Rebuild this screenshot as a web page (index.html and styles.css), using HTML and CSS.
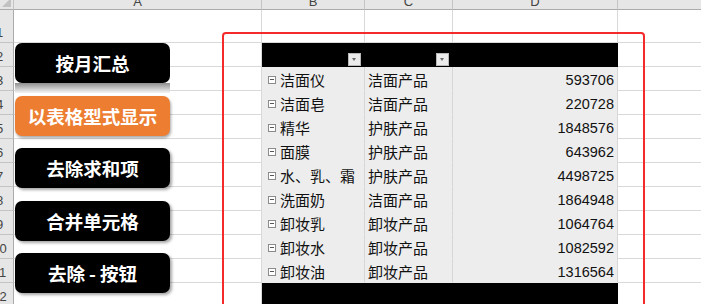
FILE: index.html
```html
<!DOCTYPE html>
<html>
<head>
  <meta charset="utf-8">
  <title>数据透视表</title>
  <link rel="stylesheet" href="styles.css">
</head>
<body>
  <div class="sheet">
    <div class="corner"></div><div class="colhead">A</div><div class="colhead">B</div><div class="colhead">C</div><div class="colhead">D</div><div class="colhead"></div>

    <div class="rowhead">1</div><div class="cell"></div><div class="cell"></div><div class="cell"></div><div class="cell"></div><div class="cell"></div>

    <div class="rowhead">2</div><div class="cell"></div>
    <div class="cell pv-head"><span class="drop"></span></div>
    <div class="cell pv-head"><span class="drop"></span></div>
    <div class="cell pv-head"></div><div class="cell"></div>

    <div class="rowhead">3</div><div class="cell"></div><div class="cell pv"><span class="fold"></span>洁面仪</div><div class="cell pv">洁面产品</div><div class="cell pv num">593706</div><div class="cell"></div>
    <div class="rowhead">4</div><div class="cell"></div><div class="cell pv"><span class="fold"></span>洁面皂</div><div class="cell pv">洁面产品</div><div class="cell pv num">220728</div><div class="cell"></div>
    <div class="rowhead">5</div><div class="cell"></div><div class="cell pv"><span class="fold"></span>精华</div><div class="cell pv">护肤产品</div><div class="cell pv num">1848576</div><div class="cell"></div>
    <div class="rowhead">6</div><div class="cell"></div><div class="cell pv"><span class="fold"></span>面膜</div><div class="cell pv">护肤产品</div><div class="cell pv num">643962</div><div class="cell"></div>
    <div class="rowhead">7</div><div class="cell"></div><div class="cell pv"><span class="fold"></span>水、乳、霜</div><div class="cell pv">护肤产品</div><div class="cell pv num">4498725</div><div class="cell"></div>
    <div class="rowhead">8</div><div class="cell"></div><div class="cell pv"><span class="fold"></span>洗面奶</div><div class="cell pv">洁面产品</div><div class="cell pv num">1864948</div><div class="cell"></div>
    <div class="rowhead">9</div><div class="cell"></div><div class="cell pv"><span class="fold"></span>卸妆乳</div><div class="cell pv">卸妆产品</div><div class="cell pv num">1064764</div><div class="cell"></div>
    <div class="rowhead">10</div><div class="cell"></div><div class="cell pv"><span class="fold"></span>卸妆水</div><div class="cell pv">卸妆产品</div><div class="cell pv num">1082592</div><div class="cell"></div>
    <div class="rowhead">11</div><div class="cell"></div><div class="cell pv"><span class="fold"></span>卸妆油</div><div class="cell pv">卸妆产品</div><div class="cell pv num">1316564</div><div class="cell"></div>

    <div class="rowhead">12</div><div class="cell"></div><div class="cell pv-head"></div><div class="cell pv-head"></div><div class="cell pv-head"></div><div class="cell"></div>
  </div>

  <!-- floating shapes over the sheet -->
  <div class="buttons">
    <div class="btn btn-glossy">按月汇总</div>
    <div class="btn btn-orange">以表格型式显示</div>
    <div class="btn">去除求和项</div>
    <div class="btn">合并单元格</div>
    <div class="btn">去除 - 按钮</div>
  </div>
  <div class="frame"></div>
</body>
</html>
```

FILE: styles.css
```css
body {
  margin: 0;
  width: 701px;
  height: 304px;
  overflow: hidden;
  position: relative;
  background: #fff;
  font-family: "Noto Sans CJK SC", "Liberation Sans", sans-serif;
}

/* Spreadsheet grid */
.sheet {
  display: grid;
  grid-template-columns: 28px 248px 103px 88px 165px 140px;
  grid-template-rows: 20px 33px repeat(11, 24px);
  margin: -10px 0 0 -14px;
}
.cell {
  box-sizing: border-box;
  border-right: 1px solid #d9d9d9;
  border-bottom: 1px solid #d9d9d9;
}
.corner {
  box-sizing: border-box;
  background: #e6e6e6;
  border-right: 1px solid #c4c4c4;
  border-bottom: 1px solid #ababab;
  position: relative;
}
.corner::after {
  content: "";
  position: absolute;
  right: 2px;
  bottom: 2px;
  border-style: solid;
  border-width: 0 0 9px 9px;
  border-color: transparent transparent #c2c2c2 transparent;
}
.colhead {
  box-sizing: border-box;
  background: #e6e6e6;
  border-right: 1px solid #c4c4c4;
  border-bottom: 1px solid #ababab;
  display: flex;
  justify-content: center;
  align-items: flex-end;
  font-family: "Liberation Sans", sans-serif;
  font-size: 13px;
  color: #444;
}
.rowhead {
  box-sizing: border-box;
  background: #e6e6e6;
  border-right: 1px solid #ababab;
  border-bottom: 1px solid #c4c4c4;
  display: flex;
  justify-content: center;
  align-items: flex-end;
  padding-bottom: 2px;
  font-family: "Liberation Sans", sans-serif;
  font-size: 13px;
  color: #444;
}

/* Pivot table */
.pv-head {
  background: #000;
  border-color: #000;
  display: flex;
  justify-content: flex-end;
  align-items: flex-end;
  padding: 0 3px 0 0;
}
.drop {
  box-sizing: border-box;
  width: 13px;
  height: 13px;
  background: #ececec;
  border: 1px solid #b8b8b8;
  position: relative;
}
.drop::after {
  content: "";
  position: absolute;
  left: 3px;
  top: 4px;
  border-style: solid;
  border-width: 3px 2.5px 0 2.5px;
  border-color: #6a6a6a transparent transparent transparent;
}
.pv {
  background: #ededed;
  border-bottom-color: transparent;
  border-right-color: #d6d6d6;
  display: flex;
  align-items: center;
  padding: 2px 0 0 3px;
  font-size: 15px;
  color: #111;
}
.pv .fold {
  box-sizing: border-box;
  width: 8px;
  height: 8px;
  margin: 0 4px 0 3px;
  border: 1px solid #8c8c8c;
  background: #fff;
  position: relative;
}
.pv .fold::after {
  content: "";
  position: absolute;
  left: 1px;
  right: 1px;
  top: 2.5px;
  height: 1px;
  background: #555;
}
.pv.num {
  justify-content: flex-end;
  padding-right: 3px;
  font-family: "Liberation Sans", sans-serif;
  font-size: 14.5px;
}

/* Macro buttons (floating shapes) */
.buttons {
  position: absolute;
  left: 15px;
  top: 43px;
  display: flex;
  flex-direction: column;
  gap: 12.5px;
}
.btn {
  width: 155px;
  height: 40px;
  border-radius: 7px;
  background: #000;
  color: #fff;
  font-size: 18.5px;
  font-weight: 700;
  display: flex;
  justify-content: center;
  align-items: center;
  box-shadow: 2px 2px 3px rgba(0, 0, 0, 0.35);
}
.btn-glossy {
  position: relative;
  box-shadow: none;
}
.btn-glossy::after {
  content: "";
  position: absolute;
  left: 0;
  right: 0;
  top: 40px;
  height: 10px;
  background: linear-gradient(#8f8f8f, #d8d8d8 70%, #f4f4f4);
}
.btn-orange {
  background: #ed7d31;
  box-shadow: 1px 2px 3px rgba(0, 0, 0, 0.35);
}

/* Red outline drawn around the pivot table */
.frame {
  position: absolute;
  left: 222px;
  top: 32px;
  width: 419px;
  height: 300px;
  border: 2px solid #f52a2a;
  border-radius: 4px;
}
```
